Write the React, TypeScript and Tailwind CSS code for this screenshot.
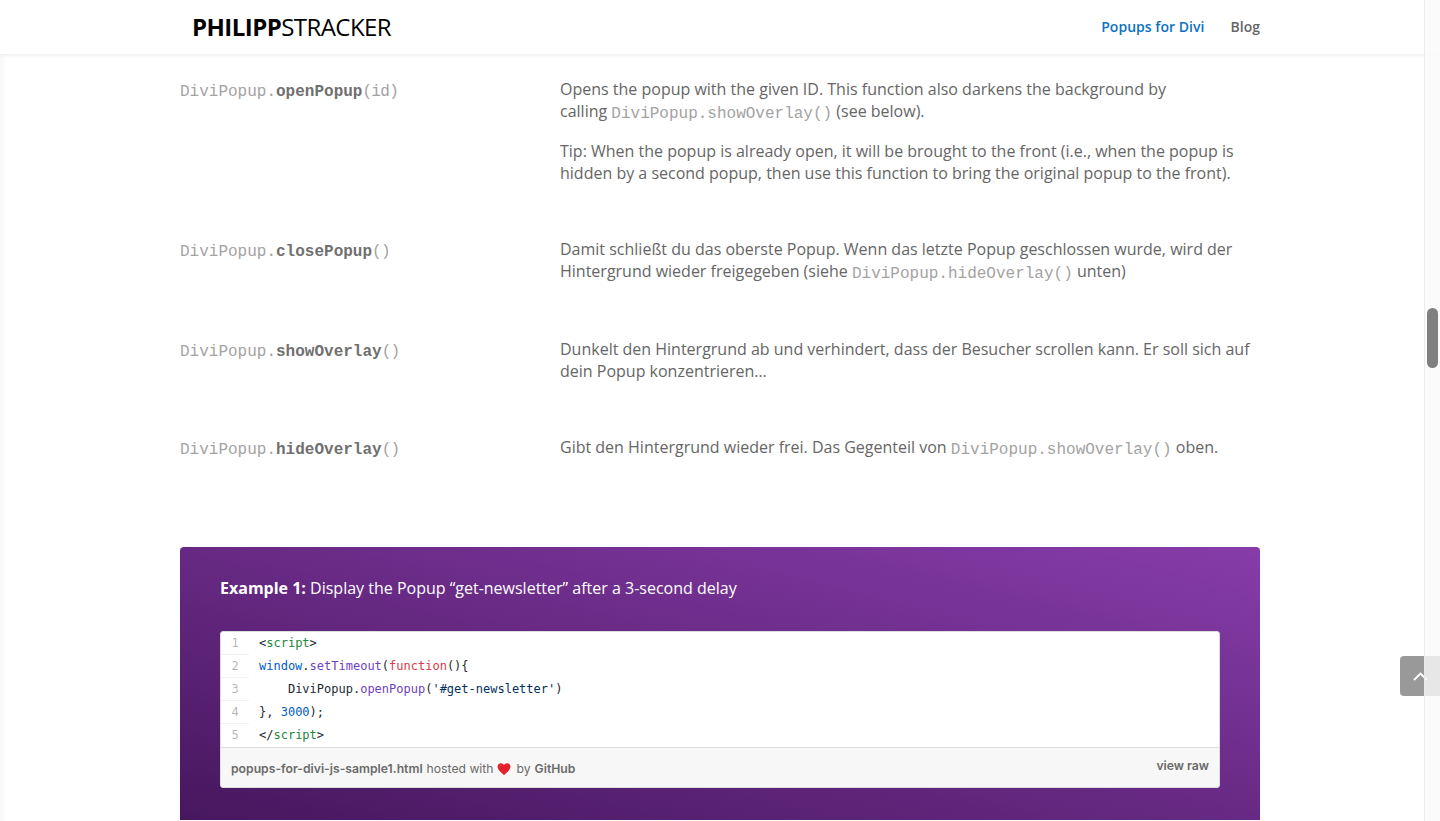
import React from 'react';

const mono = "font-['Liberation_Mono',monospace] text-[16px] text-[#a3a3a3]";

const Fn: React.FC<{ name: string; args?: string }> = ({ name, args = '' }) => (
  <code className={mono}>
    DiviPopup.<b className="font-bold text-[#707070]">{name}</b>
    <span className="tracking-[-0.7px]">({args})</span>
  </code>
);

const Call: React.FC<{ children: React.ReactNode }> = ({ children }) => (
  <code className={`${mono} relative top-px`}>{children}</code>
);

const Row: React.FC<{ fn: React.ReactNode; className: string; children: React.ReactNode }> = ({ fn, className, children }) => (
  <div className={`grid grid-cols-[380px_700px] ${className}`}>
    <div className="leading-[24px]">{fn}</div>
    <div>{children}</div>
  </div>
);

const Tag: React.FC<{ children: React.ReactNode }> = ({ children }) => <span className="text-[#22863a]">{children}</span>;

const lines: React.ReactNode[] = [
  <>
    &lt;<Tag>script</Tag>&gt;
  </>,
  <>
    <span className="text-[#005cc5]">window</span>.<span className="text-[#6f42c1]">setTimeout</span>(<span className="text-[#d73a49]">function</span>(){'{'}
  </>,
  <>
    {'    '}DiviPopup.<span className="text-[#6f42c1]">openPopup</span>(<span className="text-[#032f62]">'#get-newsletter'</span>)
  </>,
  <>
    {'}'}, <span className="text-[#005cc5]">3000</span>);
  </>,
  <>
    &lt;/<Tag>script</Tag>&gt;
  </>,
];

const Gist: React.FC = () => (
  <div className="mt-[32px] rounded-[3px] border border-[#ddd] overflow-hidden bg-white">
    <div className="h-[115px]">
      {lines.map((line, i) => (
        <div key={i} className="flex h-[23px] font-['DejaVu_Sans_Mono',monospace] text-[12px] leading-[23px] text-[#24292e]">
          <div className={`w-7 text-center text-[rgba(27,31,35,0.35)] ${i < 4 ? 'border-b border-[#f2f2f2]' : ''}`}>{i + 1}</div>
          <pre className="pl-2.5 font-[inherit]">{line}</pre>
        </div>
      ))}
    </div>
    <div className="flex justify-between h-[40px] px-2.5 border-t border-[#ddd] bg-[#f7f7f7] font-['Inter',sans-serif] text-[12.2px] text-[#6a6a6a]">
      <div className="flex items-center h-[41px]">
        <b className="font-semibold">popups-for-divi-js-sample1.html</b>
        <span className="ml-1">hosted with</span>
        <svg className="ml-[3px] mr-[6px] w-3.5 h-3.5" viewBox="0 0 24 24">
          <path
            fill="#e3202b"
            d="M12 22.5C7 18 1 13.5 1 7.800 1 4.400 3.500 2 6.600 2c2.200 0 4.200 1.200 5.400 3.300C13.200 3.200 15.200 2 17.400 2 20.500 2 23 4.400 23 7.800c0 5.700-6 10.200-11 14.700z"
          />
          <path fill="#f4767c" d="M4 8c0-2 1.200-3.300 3-3.500C5.800 5.500 5 6.500 4 8zM15.500 5c1.500-.8 3-.6 4 .4-1.300-.2-2.700-.2-4-.4z" />
        </svg>
        <span>by</span>
        <b className="ml-1 font-semibold">GitHub</b>
      </div>
      <b className="font-semibold h-[35px] leading-[35px]">view raw</b>
    </div>
  </div>
);

const App: React.FC = () => {
  return (
    <div className="relative h-[821px] overflow-hidden bg-white font-['Open_Sans',sans-serif] text-[16px] leading-[22px] text-[#666]">
      <header className="relative z-10 h-[54px] bg-white shadow-[0_1px_4px_rgba(0,0,0,0.08)]">
        <div className="mx-auto flex h-full w-[1080px] items-center justify-between pl-3">
          <div className="text-[24px] tracking-[-0.55px] text-black">
            <b className="font-bold">PHILIPP</b>STRACKER
          </div>
          <nav className="flex gap-[26px] text-[14px] font-semibold tracking-[0.03px]">
            <span className="text-[#0c71c3]">Popups for Divi</span>
            <span>Blog</span>
          </nav>
        </div>
      </header>

      <main className="mx-auto w-[1080px] pt-6">
        <Row fn={<Fn name="openPopup" args="id" />} className="h-[160px]">
          <p>
            Opens the popup with the given ID. This function also darkens the background by
            <br />
            calling <Call>DiviPopup.showOverlay()</Call> (see below).
          </p>
          <p className="mt-4">
            Tip: When the popup is already open, it will be brought to the front (i.e., when the popup is hidden by a
            second popup, then use this function to bring the original popup to the front).
          </p>
        </Row>
        <Row fn={<Fn name="closePopup" />} className="h-[100px]">
          <p>
            Damit schließt du das oberste Popup. Wenn das letzte Popup geschlossen wurde, wird der Hintergrund wieder
            freigegeben (siehe <Call>DiviPopup.hideOverlay()</Call> unten)
          </p>
        </Row>
        <Row fn={<Fn name="showOverlay" />} className="h-[98px]">
          <p>
            Dunkelt den Hintergrund ab und verhindert, dass der Besucher scrollen kann. Er soll sich auf dein Popup
            konzentrieren…
          </p>
        </Row>
        <Row fn={<Fn name="hideOverlay" />} className="h-[111px]">
          <p>
            Gibt den Hintergrund wieder frei. Das Gegenteil von <Call>DiviPopup.showOverlay()</Call> oben.
          </p>
        </Row>

        <section className="h-[273px] rounded-t-[4px] bg-[linear-gradient(to_top_right,#47175e,#873ca9)] px-10 pt-[30px]">
          <h2 className="text-[16px] leading-[22px] text-white">
            <b className="font-bold">Example 1:</b> Display the Popup “get-newsletter” after a 3-second delay
          </h2>
          <Gist />
        </section>
      </main>

      {/* soft edge shadow + fake overlay scrollbar */}
      <div className="absolute left-0 top-[54px] bottom-0 w-2 bg-gradient-to-r from-[#f8f8f8] to-white" />
      <div className="absolute right-0 top-[656px] z-20 flex h-10 w-10 items-center justify-start rounded-l-[4px] bg-[#999] pl-[13px]">
        <svg className="w-[15px] h-[9px]" viewBox="0 0 15 9" fill="none" stroke="#fff" strokeWidth="1.800">
          <path d="M1 8l6.500-6.500L14 8" />
        </svg>
      </div>
      <div className="absolute right-0 top-0 bottom-0 z-30 w-4 border-l border-[#ebebeb] bg-[#fafafa]/80">
        <div className="absolute left-[2px] top-[308px] h-[60px] w-[11px] rounded-full bg-[#7f7f7f]" />
      </div>
    </div>
  );
};

export default App;
